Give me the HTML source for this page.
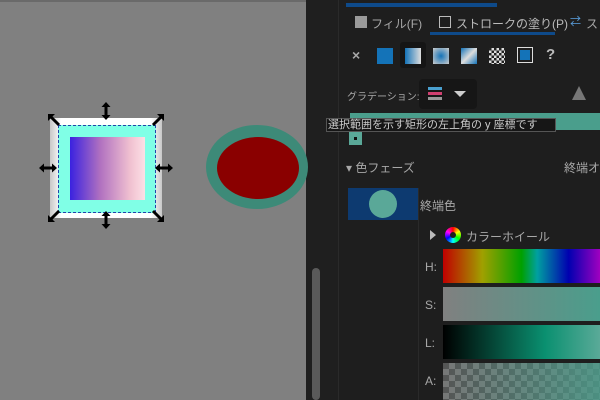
<!DOCTYPE html>
<html><head><meta charset="utf-8"><style>
*{margin:0;padding:0;box-sizing:border-box}
body{width:600px;height:400px;overflow:hidden;background:#1e1e1e;position:relative;font-family:"Liberation Sans","Noto Sans CJK JP",sans-serif;color:#a8a8a8}
.a{position:absolute}
.t{font-size:11px;white-space:nowrap}
</style></head><body>
<div class="a" style="left:0;top:0;width:306px;height:400px;background:#808080;border-top:2px solid #6a6a6a"></div>
<div class="a" style="left:306px;top:0;width:32px;height:400px;background:#1f1f1f"></div>
<div class="a" style="left:312px;top:268px;width:8px;height:132px;background:#5a5a5a;border-radius:4px"></div>
<div class="a" style="left:338px;top:0;width:1px;height:400px;background:#2a2a2a"></div>
<!-- canvas objects -->
<div class="a" style="left:50px;top:118px;width:112px;height:100px;background:linear-gradient(90deg,#c8c8c8,#fff 10%,#fff 90%,#c8c8c8)"></div>
<div class="a" style="left:58px;top:125px;width:98px;height:88px;background:#80ffe6;border:1px dashed #2244aa"></div>
<div class="a" style="left:70px;top:137px;width:75px;height:63px;background:linear-gradient(90deg,#3a22e0,#b070c0 40%,#f0c0d0 80%,#fde0e6)"></div>
<svg class="a" style="left:0;top:0" width="306" height="400">
<defs><g id="dh"><path d="M-7 0H7" stroke="#000" stroke-width="3"/><path d="M-9 0L-4 -4.5V4.5Z M9 0L4 -4.5V4.5Z" fill="#000"/></g></defs>
<use href="#dh" transform="translate(106,111) rotate(90)"/>
<use href="#dh" transform="translate(106,220) rotate(90)"/>
<use href="#dh" transform="translate(48,168)"/>
<use href="#dh" transform="translate(164,168)"/>
<g stroke="#000" stroke-width="3" fill="#000">
<path d="M50 116L59 125" /><path d="M48 114h7l-7 7z" stroke="none"/>
<path d="M162 116L153 125"/><path d="M164 114h-7l7 7z" stroke="none"/>
<path d="M50 220L59 211"/><path d="M48 222h7l-7 -7z" stroke="none"/>
<path d="M162 220L153 211"/><path d="M164 222h-7l7 -7z" stroke="none"/>
</g></svg>
<div class="a" style="left:206px;top:125px;width:102px;height:84px;border-radius:50%;background:#3d8a78"></div>
<div class="a" style="left:217px;top:137px;width:82px;height:62px;border-radius:50%;background:#8a0000"></div>
<!-- panel -->
<div class="a" style="left:346px;top:3px;width:151px;height:4px;background:#0e4a8a"></div>
<div class="a" style="left:355px;top:16px;width:12px;height:12px;background:#9a9a9a"></div>
<div class="a t" style="left:371px;top:15px;font-size:12px">フィル(F)</div>
<div class="a" style="left:439px;top:16px;width:12px;height:12px;border:1.5px solid #bbb"></div>
<div class="a t" style="left:456px;top:15px;font-size:12px;color:#bbb">ストロークの塗り(P)</div>
<div class="a" style="left:430px;top:32px;width:125px;height:3px;background:#0e4a8a"></div>
<div class="a t" style="left:570px;top:13px;color:#5aa0e0">⇄</div>
<div class="a t" style="left:586px;top:15px;font-size:12px">ス</div>
<div class="a t" style="left:352px;top:47px;font-size:14px;font-weight:bold">×</div>
<div class="a" style="left:377px;top:48px;width:16px;height:16px;background:#1473b8"></div>
<div class="a" style="left:400px;top:42px;width:26px;height:26px;background:#151515;border-radius:3px"></div>
<div class="a" style="left:405px;top:48px;width:16px;height:16px;background:linear-gradient(90deg,#1473b8,#ddd)"></div>
<div class="a" style="left:433px;top:48px;width:16px;height:16px;background:radial-gradient(#1473b8,#ccc)"></div>
<div class="a" style="left:461px;top:48px;width:16px;height:16px;background:linear-gradient(135deg,#1473b8,#ddd,#1473b8)"></div>
<div class="a" style="left:489px;top:48px;width:16px;height:16px;background:repeating-conic-gradient(#ddd 0 25%,#222 0 50%) 0 0/5px 5px"></div>
<div class="a" style="left:517px;top:47px;width:16px;height:16px;border:1.5px solid #ddd;background:#1473b8;box-shadow:inset 0 0 0 2px #1e1e1e"></div>
<div class="a t" style="left:546px;top:46px;font-size:15px;font-weight:bold;color:#bbb">?</div>
<div class="a t" style="left:347px;top:88px;font-size:10px">グラデーション:</div>
<div class="a" style="left:419px;top:79px;width:58px;height:30px;background:#161616;border-radius:4px"></div>
<div class="a" style="left:428px;top:87px;width:14px;height:3px;background:#4aa0d0"></div>
<div class="a" style="left:428px;top:92px;width:14px;height:3px;background:#d04070"></div>
<div class="a" style="left:428px;top:97px;width:14px;height:3px;background:#999"></div>
<div class="a" style="left:454px;top:91px;border:6px solid transparent;border-top:6px solid #ccc;border-bottom:0"></div>
<div class="a" style="left:572px;top:86px;width:0;height:0;border-left:7px solid transparent;border-right:7px solid transparent;border-bottom:14px solid #777"></div>
<div class="a" style="left:350px;top:113px;width:250px;height:17px;background:#4a9e8c"></div>
<div class="a" style="left:349px;top:132px;width:13px;height:13px;background:#5aa898"></div>
<div class="a" style="left:354px;top:137px;width:3px;height:3px;background:#111"></div>
<div class="a t" style="left:326px;top:118px;height:14px;width:230px;background:#161616;border:1px solid #555;font-size:11px;line-height:12px;padding-left:1px;color:#ccc">選択範囲を示す矩形の左上角の y 座標です</div>
<div class="a t" style="left:346px;top:159px;font-size:12px">▾ 色フェーズ</div>
<div class="a t" style="left:564px;top:159px;font-size:12px">終端オ</div>
<div class="a" style="left:348px;top:188px;width:70px;height:32px;background:#0d3a70"></div>
<div class="a" style="left:369px;top:190px;width:28px;height:28px;border-radius:50%;background:#5aa898"></div>
<div class="a" style="left:418px;top:188px;width:1px;height:212px;background:#2a2a2a"></div>
<div class="a t" style="left:420px;top:197px;font-size:12px">終端色</div>
<div class="a" style="left:430px;top:230px;border:5px solid transparent;border-left:6px solid #bbb;border-right:0"></div>
<div class="a" style="left:445px;top:227px;width:16px;height:16px;border-radius:50%;background:conic-gradient(red,#ff0,#0f0,#0ff,#00f,#f0f,red)"></div>
<div class="a" style="left:450px;top:232px;width:6px;height:6px;border-radius:50%;background:#1e1e1e"></div>
<div class="a t" style="left:466px;top:228px;font-size:12px">カラーホイール</div>
<div class="a t" style="left:425px;top:260px;font-size:12px">H:</div>
<div class="a" style="left:443px;top:249px;width:157px;height:34px;background:linear-gradient(90deg,#c00000,#a0a000 25%,#00a000 50%,#00a0a0 60%,#0000b0 80%,#a000c0)"></div>
<div class="a t" style="left:425px;top:298px;font-size:12px">S:</div>
<div class="a" style="left:443px;top:287px;width:157px;height:34px;background:linear-gradient(90deg,#808080,#4a9e8c)"></div>
<div class="a t" style="left:425px;top:336px;font-size:12px">L:</div>
<div class="a" style="left:443px;top:325px;width:157px;height:34px;background:linear-gradient(90deg,#000,#0a9070 65%,#5aaa98)"></div>
<div class="a t" style="left:425px;top:374px;font-size:12px">A:</div>
<div class="a" style="left:443px;top:363px;width:157px;height:37px;background:linear-gradient(90deg,rgba(74,158,140,0),rgba(74,158,140,.8)),repeating-conic-gradient(#777 0 25%,#555 0 50%) 0 0/12px 12px"></div>
</body></html>
